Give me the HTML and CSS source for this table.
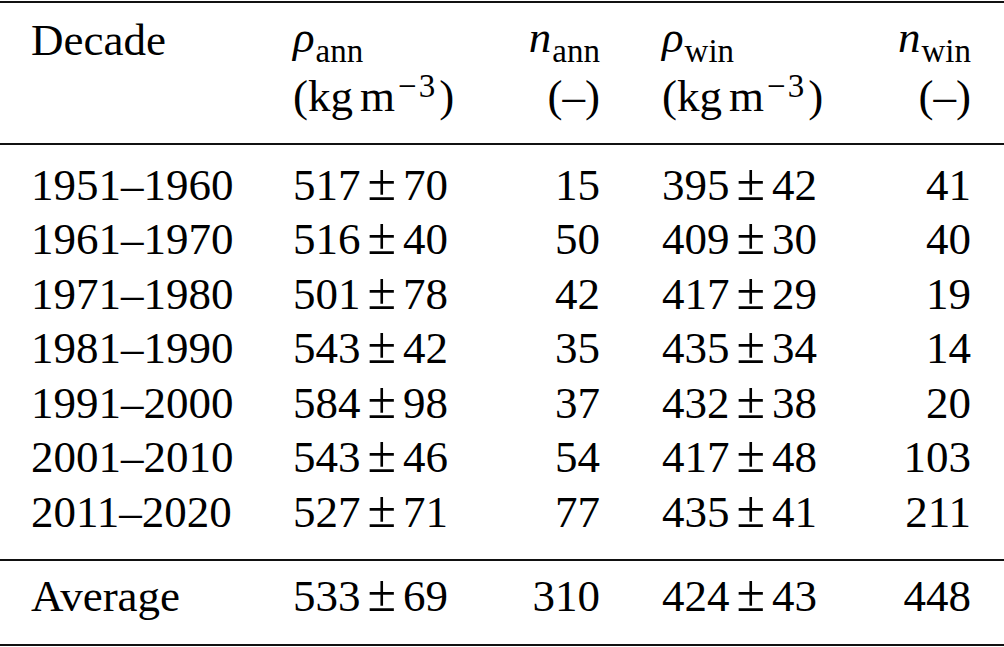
FILE: index.html
```html
<!DOCTYPE html>
<html>
<head>
<meta charset="utf-8">
<link rel="stylesheet" href="styles.css">
</head>
<body>
<table class="tbl">
  <colgroup>
    <col class="c1"><col class="c2"><col class="c3"><col class="c4"><col class="c5">
  </colgroup>
  <thead>
    <tr>
      <th class="l">Decade</th>
      <th class="l"><i class="v">ρ</i><sub>ann</sub><br>(kg<span class="ts"></span>m<sup>−3</sup>)</th>
      <th class="r"><i class="v">n</i><sub>ann</sub><br>(–)</th>
      <th class="l"><i class="v">ρ</i><sub>win</sub><br>(kg<span class="ts"></span>m<sup>−3</sup>)</th>
      <th class="r"><i class="v">n</i><sub>win</sub><br>(–)</th>
    </tr>
  </thead>
  <tbody class="body">
    <tr><td class="l">1951–1960</td><td class="l">517<span class="pm">±</span>70</td><td class="r">15</td><td class="l">395<span class="pm">±</span>42</td><td class="r">41</td></tr>
    <tr><td class="l">1961–1970</td><td class="l">516<span class="pm">±</span>40</td><td class="r">50</td><td class="l">409<span class="pm">±</span>30</td><td class="r">40</td></tr>
    <tr><td class="l">1971–1980</td><td class="l">501<span class="pm">±</span>78</td><td class="r">42</td><td class="l">417<span class="pm">±</span>29</td><td class="r">19</td></tr>
    <tr><td class="l">1981–1990</td><td class="l">543<span class="pm">±</span>42</td><td class="r">35</td><td class="l">435<span class="pm">±</span>34</td><td class="r">14</td></tr>
    <tr><td class="l">1991–2000</td><td class="l">584<span class="pm">±</span>98</td><td class="r">37</td><td class="l">432<span class="pm">±</span>38</td><td class="r">20</td></tr>
    <tr><td class="l">2001–2010</td><td class="l">543<span class="pm">±</span>46</td><td class="r">54</td><td class="l">417<span class="pm">±</span>48</td><td class="r">103</td></tr>
    <tr><td class="l">2011–2020</td><td class="l">527<span class="pm">±</span>71</td><td class="r">77</td><td class="l">435<span class="pm">±</span>41</td><td class="r">211</td></tr>
  </tbody>
  <tbody class="foot">
    <tr><td class="l">Average</td><td class="l">533<span class="pm">±</span>69</td><td class="r">310</td><td class="l">424<span class="pm">±</span>43</td><td class="r">448</td></tr>
  </tbody>
</table>
</body>
</html>
```
FILE: styles.css
```css
html, body {
  margin: 0;
  padding: 0;
  background: #fff;
}
body {
  font-family: "Liberation Serif", "Times New Roman", serif;
  font-size: 45px;
  color: #000;
}
.tbl {
  margin-top: 1px;
  width: 1004px;
  table-layout: fixed;
  border-collapse: collapse;
  border-top: 2px solid #111;
  border-bottom: 2px solid #111;
}
.c1 { width: 262px; }
.c2 { width: 229px; }
.c3 { width: 140px; }
.c4 { width: 230px; }
.c5 { width: 143px; }
th, td {
  padding: 0 31px;
  font-weight: normal;
  white-space: nowrap;
  vertical-align: top;
}
td.r:last-child, th.r:last-child { padding-right: 33px; }
.l { text-align: left; }
.r { text-align: right; }
thead th {
  line-height: 56px;
  padding-top: 9px;
  padding-bottom: 19px;
}
thead tr { border-bottom: 2px solid #111; }
.body td { line-height: 54.6px; }
.body tr:first-child td { padding-top: 12.5px; }
.body tr:last-child td { padding-bottom: 19px; }
.foot tr { border-top: 2px solid #111; }
.foot td {
  line-height: 54.6px;
  padding-top: 8.5px;
  padding-bottom: 20px;
}
.v {
  font-style: italic;
  position: relative;
  top: -3px;
}
sub, sup {
  font-size: 33px;
  line-height: 0;
  position: relative;
  vertical-align: baseline;
}
sub { top: 7px; margin-left: 1px; }
sup { top: -14px; letter-spacing: 2px; margin-left: 3px; padding-right: 2px; }
.ts { display: inline-block; width: 7px; }
.pm {
  font-size: 52px;
  line-height: 0;
  margin: 0 7px;
}
```
